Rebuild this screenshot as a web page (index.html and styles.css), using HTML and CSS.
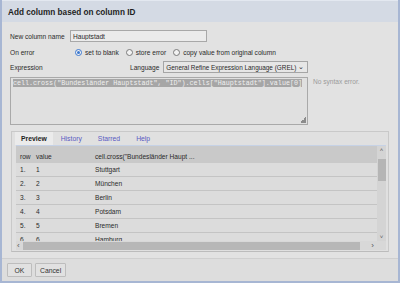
FILE: index.html
```html
<!DOCTYPE html>
<html lang="en">
<head>
  <meta charset="UTF-8">
  <title>Add column based on column ID</title>
  <link rel="stylesheet" href="styles.css">
</head>
<body>
  <div class="dialog">
    <header class="dialog-title">Add column based on column ID</header>

    <div class="dialog-body">
      <div class="form-row name-row">
        <label class="field-label" for="col-name">New column name</label>
        <input class="text-input" id="col-name" type="text" value="Hauptstadt">
      </div>

      <div class="form-row error-row">
        <span class="field-label">On error</span>
        <div class="radio-group">
          <span class="radio checked"></span><span class="radio-text">set to blank</span>
          <span class="radio"></span><span class="radio-text">store error</span>
          <span class="radio"></span><span class="radio-text">copy value from original column</span>
        </div>
      </div>

      <div class="form-row expr-row">
        <span class="field-label">Expression</span>
        <span class="lang-label">Language</span>
        <div class="select"><span>General Refine Expression Language (GREL)</span><span class="caret">&#8964;</span></div>
      </div>

      <div class="expr-area">
        <div class="textarea">
          <span class="selected-code">cell.cross("Bundesländer Hauptstadt", "ID").cells["Hauptstadt"].value[0]</span>
          <span class="grip"></span>
        </div>
        <div class="status">No syntax error.</div>
      </div>

      <div class="tab-panel">
        <div class="tab-bar">
          <span class="tab active">Preview</span>
          <span class="tab">History</span>
          <span class="tab">Starred</span>
          <span class="tab">Help</span>
        </div>

        <div class="preview">
          <div class="preview-main">
            <div class="preview-rows">
              <div class="prow head"><span>row</span><span>value</span><span>cell.cross("Bundesländer Haupt ...</span></div>
              <div class="prow"><span>1.</span><span>1</span><span>Stuttgart</span></div>
              <div class="prow"><span>2.</span><span>2</span><span>München</span></div>
              <div class="prow"><span>3.</span><span>3</span><span>Berlin</span></div>
              <div class="prow"><span>4.</span><span>4</span><span>Potsdam</span></div>
              <div class="prow"><span>5.</span><span>5</span><span>Bremen</span></div>
              <div class="prow"><span>6.</span><span>6</span><span>Hamburg</span></div>
            </div>
            <div class="vscroll">
              <span class="arrow">&#708;</span>
              <span class="vthumb"></span>
              <span class="arrow down">&#709;</span>
            </div>
          </div>
          <div class="hscroll">
            <span class="arrow">&#8249;</span>
            <span class="hthumb"></span>
            <span class="arrow">&#8250;</span>
          </div>
        </div>
      </div>
    </div>

    <footer class="dialog-footer">
      <button class="btn">OK</button>
      <button class="btn">Cancel</button>
    </footer>
  </div>
</body>
</html>
```

FILE: styles.css
```css
:root {
  --frame: #a7b6d3;
  --title-bg: #d4dae4;
  --body-bg: #e2e2e2;
  --row-bg: #dcdcdc;
  --head-bg: #c9c9c9;
  --line: #c4c4c4;
  --text: #2a2a2a;
  --link: #5a5ac2;
}

* {
  box-sizing: border-box;
}

body {
  margin: 0;
  width: 400px;
  height: 283px;
  overflow: hidden;
  font-family: "Liberation Sans", Arial, sans-serif;
  font-size: 6.6px;
  color: var(--text);
}

.dialog {
  height: 283px;
  display: flex;
  flex-direction: column;
  background-color: var(--body-bg);
  border: 2px solid var(--frame);
  border-top: 0;
}

.dialog-title {
  height: 22px;
  line-height: 23px;
  padding-left: 6px;
  font-size: 8.2px;
  font-weight: bold;
  color: #1e1e1e;
  background-color: var(--title-bg);
  border-top: 1px solid #e3e8f0;
}

.dialog-body {
  flex: 1;
  padding: 8px 8px 0 8px;
}

.form-row {
  display: flex;
  align-items: center;
}

.field-label {
  width: 59px;
  flex-shrink: 0;
}

.name-row {
  height: 12px;
}

.text-input {
  width: 137px;
  height: 12px;
  margin: 0 0 0 1px;
  padding: 0 2px;
  font: inherit;
  color: var(--text);
  background-color: #ebebeb;
  border: 1px solid #a8a8a8;
}

.error-row {
  height: 10px;
  margin-top: 5px;
}

.radio-group {
  display: flex;
  align-items: center;
  margin-left: 6px;
}

.radio {
  width: 7px;
  height: 7px;
  border: 1px solid #7a7a7a;
  border-radius: 50%;
  background-color: #f2f2f2;
  position: relative;
}

.radio.checked {
  border-color: #3b78d0;
}

.radio.checked::after {
  content: "";
  position: absolute;
  left: 1px;
  top: 1px;
  width: 3px;
  height: 3px;
  border-radius: 50%;
  background-color: #3b78d0;
}

.radio-text {
  margin: 0 7px 0 3px;
}

.expr-row {
  height: 12px;
  margin-top: 4px;
}

.lang-label {
  margin-left: 61px;
}

.select {
  display: flex;
  align-items: center;
  margin-left: 4px;
  width: 145px;
  height: 12px;
  padding: 0 3px 0 2px;
  font-size: 6.4px;
  border: 1px solid #a5a5a5;
  background-color: #e6e6e6;
  white-space: nowrap;
}

.caret {
  margin-left: auto;
  font-size: 7px;
  line-height: 6px;
}

.expr-area {
  display: flex;
  margin-top: 4px;
}

.textarea {
  width: 298px;
  height: 48px;
  padding: 1px 2px;
  border: 1px solid #a9a9a9;
  background-color: #e0e0e0;
  position: relative;
}

.selected-code {
  font-family: "Liberation Mono", "Courier New", monospace;
  font-size: 6.7px;
  white-space: nowrap;
  color: #f0f0f0;
  background-color: #a6a6a6;
}

.grip {
  position: absolute;
  right: 1px;
  bottom: 1px;
  width: 6px;
  height: 6px;
  background: linear-gradient(135deg, transparent 50%, #8c8c8c 50%);
}

.status {
  margin: 1px 0 0 5px;
  color: #9a9a9a;
}

.tab-panel {
  margin: 6px 1px 0 1px;
  height: 121px;
  border: 1px solid #c9c9c9;
  border-bottom-color: #bcbcbc;
  padding: 0 2px 0 4px;
  background-color: #e0e0e0;
}

.tab-bar {
  display: flex;
  height: 13px;
  align-items: stretch;
}

.tab {
  padding: 0 8px;
  line-height: 13px;
  color: var(--link);
  font-size: 6.8px;
}

.tab.active {
  margin-left: -1px;
  padding: 0 6px;
  font-weight: bold;
  color: #222;
  background-color: #ebebeb;
}

.preview {
  border-top: 1px solid #c6d2e6;
  background-color: var(--row-bg);
}

.preview-main {
  display: flex;
  height: 95px;
}

.preview-rows {
  flex: 1;
  overflow: hidden;
}

.prow {
  display: grid;
  grid-template-columns: 16px 59px 1fr;
  height: 14px;
  align-items: center;
  padding-left: 4px;
  border-bottom: 1px solid var(--line);
}

.prow.head {
  height: 17px;
  padding-top: 3px;
  background-color: var(--head-bg);
  border-bottom: 0;
}

.vscroll {
  width: 9px;
  display: flex;
  flex-direction: column;
  align-items: center;
  background-color: #d4d4d4;
}

.arrow {
  font-size: 6px;
  line-height: 8px;
  color: #555;
}

.vthumb {
  width: 8px;
  height: 22px;
  margin-top: 5px;
  background-color: #b5b5b5;
}

.arrow.down {
  margin-top: auto;
}

.hscroll {
  display: flex;
  align-items: center;
  height: 9px;
  padding: 0 12px 0 1px;
  background-color: #d8d8d8;
}

.hscroll .arrow {
  font-size: 8px;
}

.hthumb {
  flex: 1;
  height: 8px;
  margin: 0 11px 0 3px;
  background-color: #b7b7b7;
}

.dialog-footer {
  height: 23px;
  display: flex;
  align-items: center;
  gap: 3px;
  padding-left: 5px;
  background-color: #dddddd;
  border-top: 1px solid #cfcfcf;
}

.btn {
  height: 14px;
  padding: 0 4px;
  font: inherit;
  font-size: 6.8px;
  color: #333;
  background-color: #e1e1e1;
  border: 1px solid #bdbdbd;
  border-radius: 1px;
}

.btn:first-child {
  width: 25px;
}
```
